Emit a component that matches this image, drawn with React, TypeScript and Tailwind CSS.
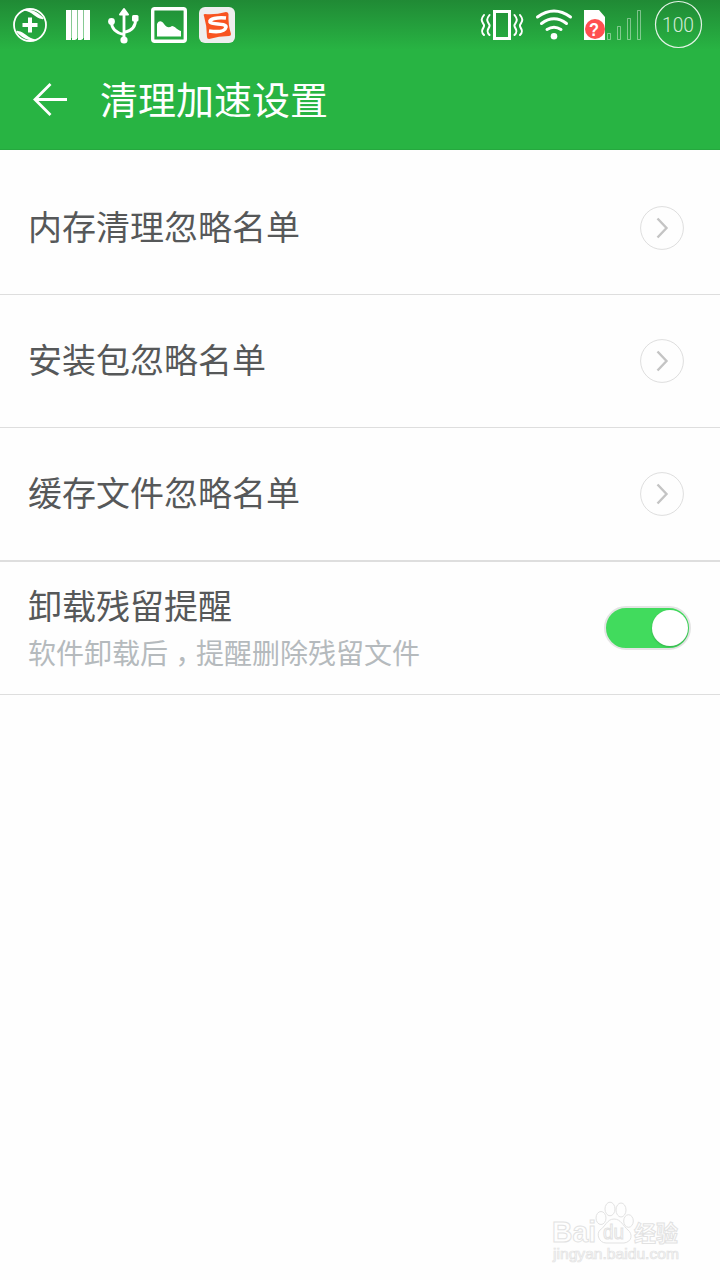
import React from "react";

const rows = ["内存清理忽略名单", "安装包忽略名单", "缓存文件忽略名单"];

function StatusBar() {
  return (
    <div className="flex h-[50px] items-start justify-between bg-linear-to-b from-[#208a35] to-[#28b443]">
      <svg width="250" height="50" viewBox="0 0 250 50" fill="none">
        <circle cx="30" cy="25" r="16" stroke="#fff" strokeWidth="1.8" />
        <path d="M24 10.500C30 8 38 12 43.500 18C44 19 43 19.500 42 19C35 18 33 12 24 10.500Z" fill="#fff" />
        <path d="M36 39.500C30 42 22 38 16.500 32C16 31 17 30.500 18 31C25 32 27 38 36 39.500Z" fill="#fff" />
        <path d="M30 17.5V32.500M22.500 25H37.500" stroke="#fff" strokeWidth="4" />
        <path d="M66 10H71V40H66ZM72 10H77V39L75 40H72ZM78 10H83V39L81 40H78ZM84 10H90V40H84Z" fill="#fff" />
        <path d="M71.500 10V38M77.500 10V38M83.500 10V38" stroke="#fff" strokeOpacity=".45" />
        <path d="M124 13V39M111.500 22C111.500 29 117 33 124 34.500M135.500 19C136 27 131 31 124 32.500" stroke="#fff" strokeWidth="2.800" />
        <path d="M124 9L128 14.500H120Z" fill="#fff" stroke="#fff" strokeWidth="2" strokeLinejoin="round" />
        <circle cx="111.500" cy="21.500" r="3.400" fill="#fff" />
        <rect x="132" y="15" width="6.500" height="6.500" rx="1.500" fill="#fff" />
        <circle cx="124" cy="40" r="3.600" fill="#fff" />
        <rect x="152.700" y="8.700" width="32.600" height="32.600" rx="2" stroke="#fff" strokeWidth="3.400" />
        <path d="M157 36.500V24C159 20 162 21 164 24C167 28 169 28 172 26C175 26 177 30 181 31V36.500Z" fill="#fff" />
        <rect x="199" y="7" width="36" height="36" rx="6" fill="#eee" />
        <path d="M205 14Q215 15 226 12Q228 12 228.500 14Q228 25 231 34Q231 36 229 36Q219 36 209 39Q207 39 207 37Q207 26 204 16Q203 14 205 14Z" fill="#f85420" />
        <path d="M226 18C217 17 209 19 210 22C212 25 226 23 226 27C225 32 216 32 209 31" stroke="#fff" strokeWidth="3.600" />
      </svg>
      <svg width="250" height="50" viewBox="470 0 250 50" fill="none">
        <rect x="494.500" y="11.500" width="15" height="27" stroke="#fff" strokeWidth="3" />
        <path d="M484 15C480 20 482 21 484 25C485 28 479 30 484 35M489.500 15C485.500 20 487.500 21 489.500 25C490.500 28 484.500 30 489.500 35M514.500 15C518.500 20 516.500 21 514.500 25C513.500 28 519.500 30 514.500 35M520 15C524 20 522 21 520 25C519 28 525 30 520 35" stroke="#fff" strokeWidth="2" strokeLinecap="round" />
        <path d="M537.500 17Q554 5 570.500 17M541.500 23.500Q554 14 566.500 23.500M547 29.500Q554 25 561 29.500" stroke="#fff" strokeWidth="3" strokeLinecap="round" />
        <circle cx="554" cy="36.300" r="3.300" fill="#fff" />
        <path d="M584 10H599L605 17V40H584Z" fill="#fff" />
        <circle cx="595" cy="29" r="10" fill="#ff5050" />
        <text x="594" y="36" textAnchor="middle" textLength="10" lengthAdjust="spacingAndGlyphs" className="fill-white font-['Liberation_Sans'] text-[19px] font-bold">?</text>
        <path d="M607.500 33.500H610.500V39.500H607.500ZM617.500 26.500H620.500V39.500H617.500ZM627.500 18.500H630.500V39.500H627.500ZM637.500 10.500H640.500V39.500H637.500Z" stroke="#fff" strokeOpacity=".42" />
        <circle cx="678.500" cy="24.500" r="23" stroke="#e5f4e8" strokeWidth="1.200" />
        <text x="662" y="32" textLength="32" lengthAdjust="spacingAndGlyphs" className="fill-[#d5ecd9] font-[Roboto] text-[20.500px] font-light">100</text>
      </svg>
    </div>
  );
}

function Chevron() {
  return (
    <svg width="44" height="44" viewBox="0 0 44 44" fill="none">
      <circle cx="22" cy="22" r="21.400" stroke="#dedede" />
      <path d="M17.500 12.500L26.500 22L17.500 31.500" stroke="#c4c4c4" strokeWidth="2.400" />
    </svg>
  );
}

function Watermark() {
  return (
    <svg width="150" height="70" viewBox="545 1200 150 70" fill="#fefefe" stroke="#e2e2e2" strokeWidth="1">
      <text x="552" y="1242" textLength="44" lengthAdjust="spacingAndGlyphs" className="font-['Liberation_Sans'] text-[29px] font-bold">Bai</text>
      <ellipse cx="601" cy="1218" rx="5" ry="6.500" />
      <ellipse cx="610" cy="1209" rx="5" ry="6.800" />
      <ellipse cx="621" cy="1210" rx="5" ry="7" />
      <ellipse cx="628.500" cy="1221" rx="4.800" ry="6.300" />
      <path d="M614 1219C607 1219 605 1227 600 1230C596 1234 599 1243 606 1243H624C632 1242 633 1234 628 1230C623 1226 621 1219 614 1219Z" />
      <text x="603" y="1239" textLength="21" lengthAdjust="spacingAndGlyphs" className="font-['Liberation_Sans'] text-[20px]">du</text>
      <text x="634" y="1241" textLength="44" lengthAdjust="spacingAndGlyphs" className="font-['Noto_Sans_CJK_SC'] text-[22px] font-bold">经验</text>
      <text x="553" y="1259" textLength="126" lengthAdjust="spacingAndGlyphs" strokeWidth=".7" className="font-['Liberation_Sans'] text-[14px]">jingyan.baidu.com</text>
    </svg>
  );
}

export default function App() {
  return (
    <div className="flex h-[1280px] w-[720px] flex-col bg-[#fefefe] font-['Noto_Sans_CJK_SC',sans-serif] text-[#565859]">
      <header className="h-[150px] border-b border-[#25a83e] bg-[#28b443]">
        <StatusBar />
        <div className="flex h-[99px] items-center pl-8">
          <svg width="36" height="36" viewBox="0 0 36 36" fill="none" stroke="#fff" strokeWidth="2.800">
            <path d="M18.500 2L3 17.500L18.500 33M3 17.500H35" />
          </svg>
          <h1 className="ml-8 pb-1 text-[38px] leading-[50px] text-white">清理加速设置</h1>
        </div>
      </header>
      <main className="pt-3">
        {rows.map((label) => (
          <div key={label} className="flex h-[133px] items-center justify-between border-b border-[#dedede] pr-9 pl-7">
            <span className="pb-1 text-[34px] leading-[50px]">{label}</span>
            <Chevron />
          </div>
        ))}
        <div className="flex h-[134px] items-center justify-between border-t border-b border-[#dedede] pr-[29px] pl-7">
          <div>
            <div className="text-[34px] leading-[48px]">卸载残留提醒</div>
            <div className="text-[28px] leading-[46px] text-[#b5babd]">
              软件卸载后<span lang="zh-TW" className="relative top-2 font-['Noto_Sans_CJK_TC']">，</span>提醒删除残留文件
            </div>
          </div>
          <div className="flex h-[44px] w-[87px] items-center justify-end rounded-full border-2 border-[#e4e4e4] bg-[#41db5d] pr-px">
            <div className="size-9 rounded-full bg-white shadow-[0_1px_2px_#0003]" />
          </div>
        </div>
      </main>
      <footer className="mt-auto flex justify-end pr-[25px] pb-[10px]">
        <Watermark />
      </footer>
    </div>
  );
}
